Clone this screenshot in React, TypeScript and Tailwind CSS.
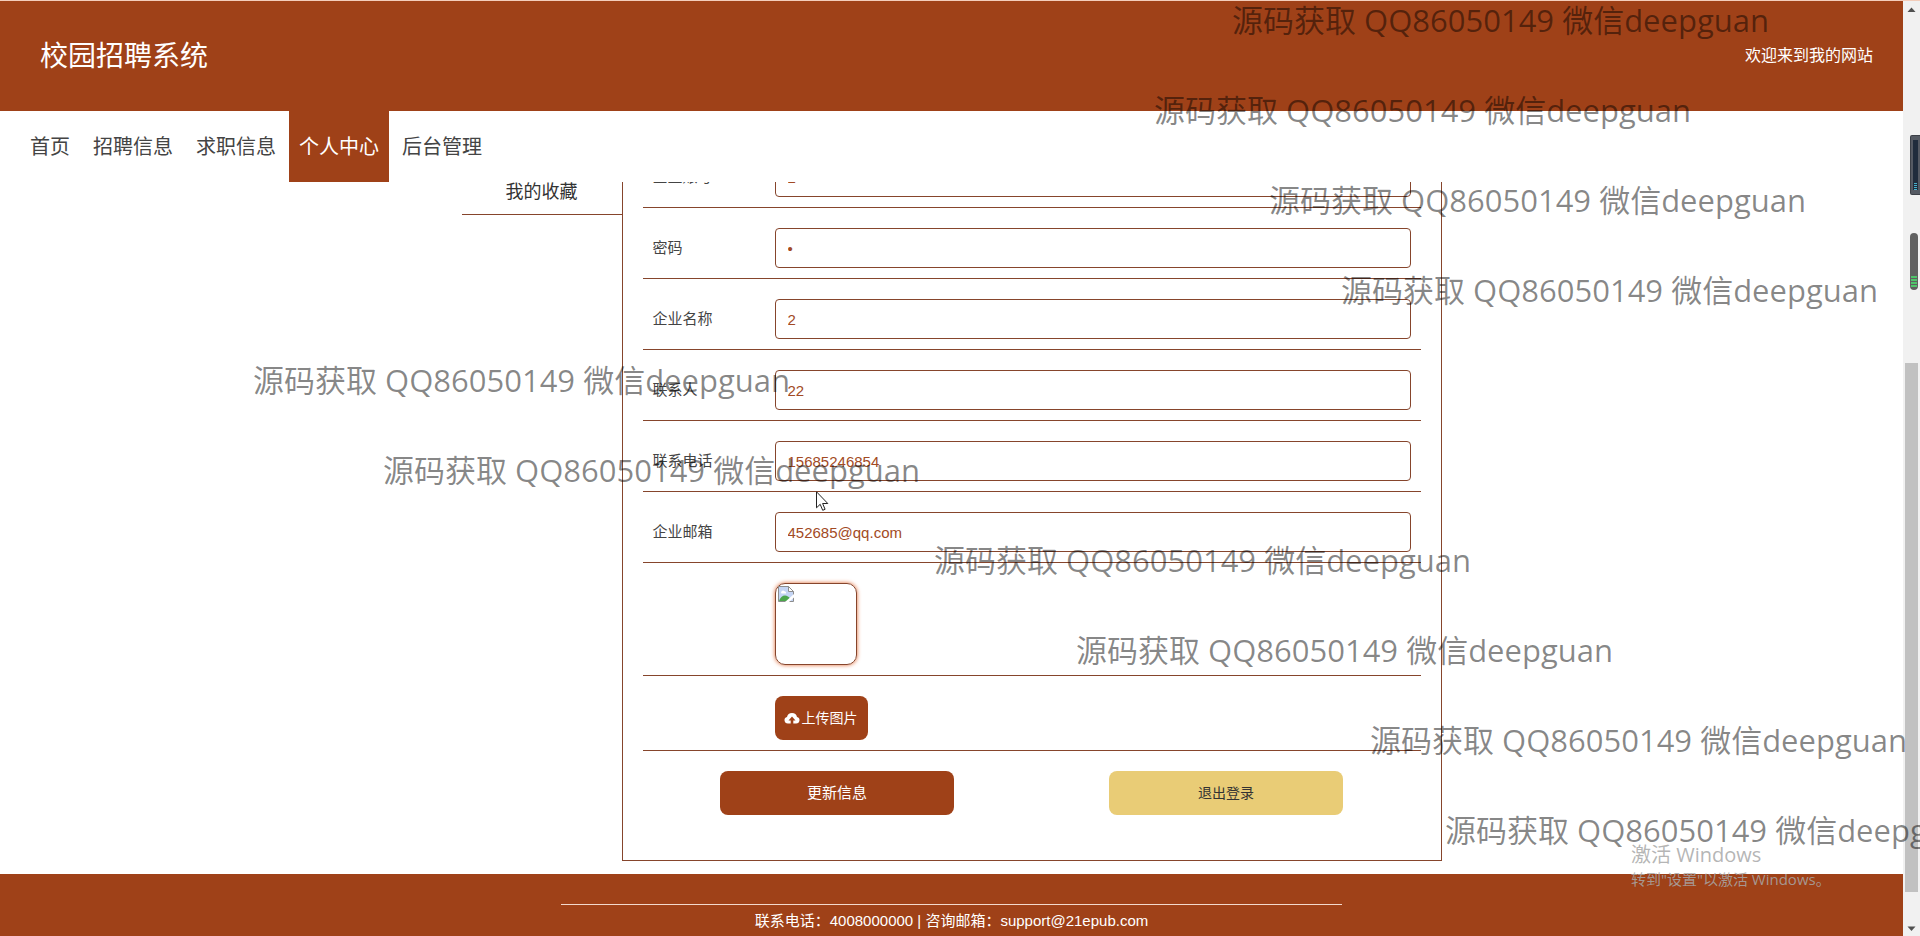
const navItems = ["首页", "招聘信息", "求职信息", "个人中心", "后台管理"];

const fields = [
  { id: "account", label: "企业账号", value: "2", type: "text" },
  { id: "password", label: "密码", value: "2", type: "password" },
  { id: "company", label: "企业名称", value: "2", type: "text" },
  { id: "contact", label: "联系人", value: "22", type: "text" },
  { id: "phone", label: "联系电话", value: "15685246854", type: "text" },
  { id: "email", label: "企业邮箱", value: "452685@qq.com", type: "text" },
];

const marks = [
  "left-[1232px] top-0",
  "left-[1154px] top-[90px]",
  "left-[1269px] top-[180px]",
  "left-[1341px] top-[270px]",
  "left-[253px] top-[360px]",
  "left-[383px] top-[450px]",
  "left-[934px] top-[540px]",
  "left-[1076px] top-[630px]",
  "left-[1370px] top-[720px]",
  "left-[1445px] top-[810px]",
];

function Header() {
  return (
    <header className="flex h-[111px] items-center justify-between border-t border-[#f3cdbb] bg-[#9f4118] pr-[30px] pb-1 pl-10 text-white">
      <h1 className="text-[28px] leading-10">校园招聘系统</h1>
      <p className="text-base">欢迎来到我的网站</p>
    </header>
  );
}

function Nav() {
  return (
    <nav className="relative z-10 flex h-[71px] gap-[3px] bg-white pl-5 text-xl text-[#444]">
      {navItems.map((item) => (
        <a
          key={item}
          href="#"
          className={
            item === "个人中心"
              ? "flex items-center bg-[#9f4118] px-[10px] pb-[2px] text-white"
              : "flex items-center px-[10px] pb-[2px]"
          }
        >
          {item}
        </a>
      ))}
    </nav>
  );
}

function BrokenImage() {
  return (
    <svg width="16" height="16" viewBox="0 0 16 16" aria-hidden="true">
      <path d="M.5.5h10l5 5v10H.5z" fill="#c5d5f4" stroke="#8d8d8d" />
      <path d="M10.500 .5v5h5z" fill="#fff" stroke="#8d8d8d" />
      <path d="M3 6.500a2 2 0 0 1 3.500-1.200A1.600 1.600 0 0 1 8 7.500H3.500z" fill="#fff" />
      <path d="M1 15c1-3.500 3.500-5.500 6-5.500 2 0 4 1.500 5 2.500v3z" fill="#4ca64c" />
      <path d="M7 16l9-8v3.500L11 16z" fill="#fff" />
    </svg>
  );
}

function UploadIcon() {
  return (
    <svg width="16" height="16" viewBox="0 0 16 16" fill="currentColor" aria-hidden="true">
      <path d="M6.700 13.500H3.800A3.300 3.300 0 0 1 3 7a5.100 5.100 0 0 1 10 0 3.300 3.300 0 0 1-.8 6.500H9.300V10.500h2.200L8 6.600l-3.500 3.900h2.200z" />
    </svg>
  );
}

function ProfileForm() {
  return (
    <form
      className="w-[820px] border border-t-0 border-[#86452c] px-5 pb-[45px]"
      onSubmit={(e) => e.preventDefault()}
    >
      {fields.map((f) => (
        <div key={f.id} className="flex items-center border-b border-[#86452c] px-[10px] pt-5 pb-[10px]">
          <label htmlFor={f.id} className="w-[122px] shrink-0 pb-[2px] text-[15px] text-[#444]">
            {f.label}
          </label>
          <input
            id={f.id}
            type={f.type}
            defaultValue={f.value}
            className="h-10 min-w-0 flex-1 rounded border border-[#86452c] bg-white px-3 font-['Liberation_Sans','Noto_Sans_CJK_SC',sans-serif] text-[15px] text-[#a24a24] outline-none"
          />
        </div>
      ))}
      <div className="border-b border-[#86452c] pt-5 pb-[10px] pl-[132px]">
        <div className="h-[82px] w-[82px] rounded-[10px] border border-[#86452c] p-[2px] shadow-[0_0_4px_#e0662f]">
          <BrokenImage />
        </div>
      </div>
      <div className="border-b border-[#86452c] pt-5 pb-[10px] pl-[132px]">
        <button
          type="button"
          className="flex h-11 items-center gap-[2px] rounded-lg bg-[#9f4118] pr-[10px] pl-[9px] text-sm text-white"
        >
          <UploadIcon />
          <span className="pb-[2px]">上传图片</span>
        </button>
      </div>
      <div className="grid grid-cols-2 justify-items-center pt-5">
        <button type="submit" className="h-11 w-3/5 rounded-lg bg-[#9f4118] pb-[2px] text-[15px] text-white">
          更新信息
        </button>
        <button type="button" className="h-11 w-3/5 rounded-lg bg-[#e9cc76] pb-[2px] text-sm text-[#333]">
          退出登录
        </button>
      </div>
    </form>
  );
}

function Footer() {
  return (
    <footer className="flex-1 bg-[#9f4118] pt-[30px] text-center font-['Liberation_Sans','Noto_Sans_CJK_SC',sans-serif] text-[15px] text-white">
      <div className="mx-auto w-[41%] border-t border-[#f3d9cd] pt-[5px] leading-[22px]">
        联系电话：4008000000 | 咨询邮箱：support@21epub.com
      </div>
    </footer>
  );
}

function Scrollbar() {
  return (
    <div className="flex w-[17px] shrink-0 flex-col items-center border-t border-[#f3cdbb] bg-[#f1f1f1]">
      <svg width="17" height="17" viewBox="0 0 17 17" aria-hidden="true">
        <path d="M4.500 11l4-4.500 4 4.500z" fill="#505050" />
      </svg>
      <div className="flex w-full flex-1 flex-col items-center pt-[345px] pb-[27px]">
        <div className="w-[13px] flex-1 bg-[#c1c1c1]" />
      </div>
      <svg width="17" height="17" viewBox="0 0 17 17" aria-hidden="true">
        <path d="M4.500 7.500l4 4.500 4-4.500z" fill="#505050" />
      </svg>
    </div>
  );
}

function Overlays() {
  return (
    <div className="pointer-events-none absolute inset-0 z-20 overflow-hidden">
      {marks.map((place) => (
        <span
          key={place}
          className={`absolute font-['Open_Sans','Noto_Sans_CJK_SC',sans-serif] text-[31px] leading-10 whitespace-nowrap text-black/47 ${place}`}
        >
          源码获取 QQ86050149 微信deepguan
        </span>
      ))}
      <div className="absolute top-[841px] left-[1631px] font-['Open_Sans','Noto_Sans_CJK_SC',sans-serif] whitespace-nowrap text-[#a8a8a8]/85">
        <p className="text-xl leading-[28px]">激活 Windows</p>
        <p className="text-[15px] leading-5">转到"设置"以激活 Windows。</p>
      </div>
      <svg className="absolute top-[491px] left-[816px]" width="13" height="21" viewBox="0 0 13 21" aria-hidden="true">
        <path d="M.5.8v16l3.700-3.500 2.500 6 2.400-1-2.500-5.800h5.200z" fill="#fff" stroke="#222" />
      </svg>
      <svg className="absolute top-[135px] right-0" width="10" height="60" viewBox="0 0 10 60" aria-hidden="true">
        <rect width="14" height="60" rx="2" fill="#3c4047" />
        <rect x="1" y="1" width="12" height="58" rx="1" fill="#555a63" />
        <rect x="3" y="5" width="5" height="50" fill="#202c3c" />
        <path d="M5.500 48v8" stroke="#45b2cc" strokeWidth="3" strokeDasharray="1 1" />
      </svg>
      <svg className="absolute top-[233px] right-[2px]" width="8" height="57" viewBox="0 0 8 57" aria-hidden="true">
        <rect width="8" height="57" rx="4" fill="#606060" />
        <path d="M4 43v12" stroke="#4fc46a" strokeWidth="6" strokeDasharray="2 1" />
      </svg>
    </div>
  );
}

export default function App() {
  return (
    <div className="relative flex min-h-screen overflow-hidden bg-white font-['Noto_Sans_CJK_SC',sans-serif]">
      <div className="flex min-w-0 flex-1 flex-col">
        <Header />
        <Nav />
        <main className="overflow-hidden pb-[13px]">
          <div className="-mt-[45px] flex justify-center">
            <aside className="w-40 pt-8">
              <a
                href="#"
                className="flex h-[46px] items-center justify-center border-b border-[#86452c] pb-1 text-lg text-[#333]"
              >
                我的收藏
              </a>
            </aside>
            <ProfileForm />
          </div>
        </main>
        <Footer />
      </div>
      <Scrollbar />
      <Overlays />
    </div>
  );
}
